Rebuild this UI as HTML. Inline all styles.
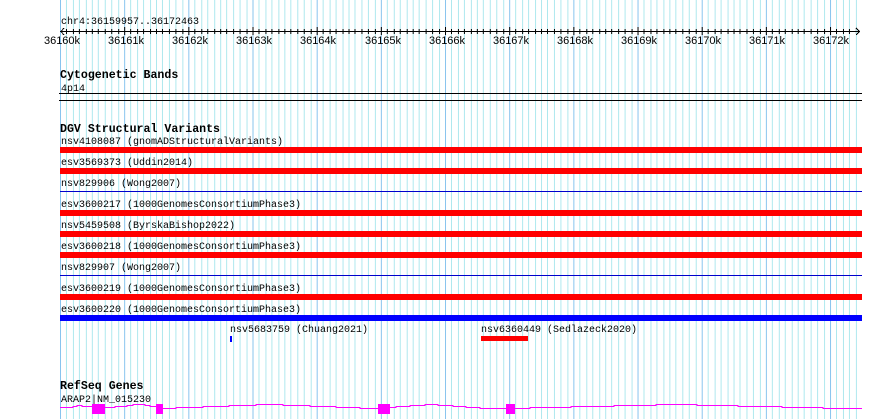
<!DOCTYPE html>
<html><head><meta charset="utf-8"><style>
html,body{margin:0;padding:0;background:#fff;width:890px;height:419px;overflow:hidden}
svg{display:block}
.m{font-family:"Liberation Mono",monospace;font-size:10px;fill:#000}
.b{font-family:"Liberation Mono",monospace;font-size:11.6px;font-weight:bold;fill:#000}
.s{font-family:"Liberation Sans",sans-serif;font-size:11px;fill:#000}
</style></head><body>
<svg width="890" height="419" viewBox="0 0 890 419" xmlns="http://www.w3.org/2000/svg" shape-rendering="crispEdges">
<defs>
<pattern id="g" patternUnits="userSpaceOnUse" x="60" y="0" width="64.17" height="419">
<rect x="0" y="0" width="1" height="419" fill="#88c4ee"/>
<rect x="6" y="0" width="1" height="419" fill="#aee8ee"/>
<rect x="13" y="0" width="1" height="419" fill="#aee8ee"/>
<rect x="19" y="0" width="1" height="419" fill="#aee8ee"/>
<rect x="26" y="0" width="1" height="419" fill="#aee8ee"/>
<rect x="32" y="0" width="1" height="419" fill="#aee8ee"/>
<rect x="38" y="0" width="1" height="419" fill="#aee8ee"/>
<rect x="45" y="0" width="1" height="419" fill="#aee8ee"/>
<rect x="51" y="0" width="1" height="419" fill="#aee8ee"/>
<rect x="58" y="0" width="1" height="419" fill="#aee8ee"/>
</pattern>
<pattern id="t" patternUnits="userSpaceOnUse" x="60" y="0" width="64.17" height="40">
<rect x="0" y="27" width="1" height="8" fill="#000"/>
<rect x="6" y="29" width="1" height="5" fill="#000"/>
<rect x="13" y="29" width="1" height="5" fill="#000"/>
<rect x="19" y="29" width="1" height="5" fill="#000"/>
<rect x="26" y="29" width="1" height="5" fill="#000"/>
<rect x="32" y="29" width="1" height="5" fill="#000"/>
<rect x="38" y="29" width="1" height="5" fill="#000"/>
<rect x="45" y="29" width="1" height="5" fill="#000"/>
<rect x="51" y="29" width="1" height="5" fill="#000"/>
<rect x="58" y="29" width="1" height="5" fill="#000"/>
</pattern>
</defs>
<rect x="60" y="0" width="798" height="419" fill="url(#g)"/>
<text class="m" x="61" y="24">chr4:36159957..36172463</text>
<rect x="60" y="31" width="800" height="1" fill="#000"/>
<rect x="62" y="0" width="794" height="40" fill="url(#t)"/>
<path d="M64 28 L61 31.5 L64 35 M856 28 L859.5 31.5 L856 35" stroke="#000" fill="none" stroke-width="1"/>
<g class="s" text-anchor="middle">
<text x="62" y="44">36160k</text><text x="126" y="44">36161k</text><text x="190" y="44">36162k</text><text x="254" y="44">36163k</text><text x="318" y="44">36164k</text><text x="383" y="44">36165k</text><text x="447" y="44">36166k</text><text x="511" y="44">36167k</text><text x="575" y="44">36168k</text><text x="639" y="44">36169k</text><text x="703" y="44">36170k</text><text x="767" y="44">36171k</text><text x="831" y="44">36172k</text>
</g>
<text class="b" x="60" y="78">Cytogenetic Bands</text>
<text class="m" x="61" y="91">4p14</text>
<rect x="59" y="93" width="803" height="1" fill="#000"/>
<rect x="59" y="100" width="803" height="1" fill="#000"/>
<text class="b" x="60" y="132">DGV Structural Variants</text>
<g class="m">
<text x="61" y="144">nsv4108087 (gnomADStructuralVariants)</text>
<text x="61" y="165">esv3569373 (Uddin2014)</text>
<text x="61" y="186">nsv829906 (Wong2007)</text>
<text x="61" y="207">esv3600217 (1000GenomesConsortiumPhase3)</text>
<text x="61" y="228">nsv5459508 (ByrskaBishop2022)</text>
<text x="61" y="249">esv3600218 (1000GenomesConsortiumPhase3)</text>
<text x="61" y="270">nsv829907 (Wong2007)</text>
<text x="61" y="291">esv3600219 (1000GenomesConsortiumPhase3)</text>
<text x="61" y="312">esv3600220 (1000GenomesConsortiumPhase3)</text>
<text x="230" y="332">nsv5683759 (Chuang2021)</text>
<text x="481" y="332">nsv6360449 (Sedlazeck2020)</text>
</g>
<g fill="#ff0000">
<rect x="60" y="147" width="802" height="6"/>
<rect x="60" y="168" width="802" height="6"/>
<rect x="60" y="210" width="802" height="6"/>
<rect x="60" y="231" width="802" height="6"/>
<rect x="60" y="252" width="802" height="6"/>
<rect x="60" y="294" width="802" height="6"/>
<rect x="481" y="336" width="47" height="5"/>
</g>
<rect x="60" y="191" width="802" height="1" fill="#0000cc"/>
<rect x="60" y="275" width="802" height="1" fill="#0000cc"/>
<rect x="60" y="315" width="802" height="6" fill="#0000ff"/>
<rect x="230" y="336" width="2" height="6" fill="#0000ff"/>
<text class="b" x="60" y="389">RefSeq Genes</text>
<text class="m" x="61" y="402">ARAP2|NM_015230</text>
<path d="M60 407.5 H73 V406.5 H77 V405.5 H82 V406.5 H92 M105 407.5 H115 V406.5 H127 V405.5 H133 V404.5 H145 V405.5 H150 V406.5 H156 M163 408.5 H176 V407.5 H203 V406.5 H229 V405.5 H256 V404.5 H283 V405.5 H310 V406.5 H336 V407.5 H360 V408.5 H378 M390 407.5 H396 V406.5 H410 V405.5 H425 V404.5 H438 V405.5 H453 V406.5 H466 V407.5 H480 V408.5 H506 M515 408.5 H530 V407.5 H571 V406.5 H614 V405.5 H656 V404.5 H697 V405.5 H738 V406.5 H782 V407.5 H823 V408.5 H862" stroke="#ff00ff" stroke-width="1.3" fill="none"/>
<g fill="#ff00ff">
<rect x="92" y="404" width="13" height="10"/>
<rect x="156" y="404" width="7" height="10"/>
<rect x="378" y="404" width="12" height="10"/>
<rect x="506" y="404" width="9" height="10"/>
</g>
</svg>
</body></html>
